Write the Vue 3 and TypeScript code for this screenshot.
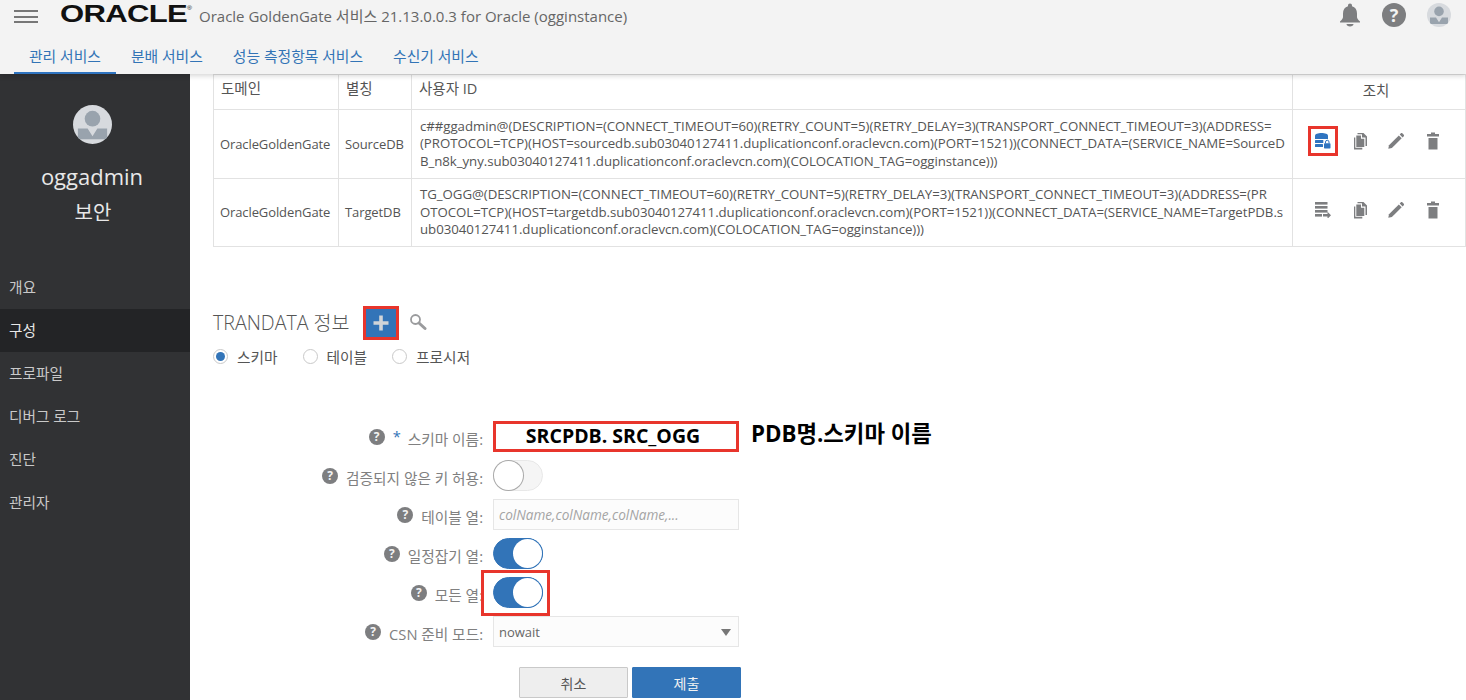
<script setup lang="ts">
const tabs = ['관리 서비스', '분배 서비스', '성능 측정항목 서비스', '수신기 서비스']
const nav = ['개요', '구성', '프로파일', '디버그 로그', '진단', '관리자']
const rows = [
  {
    domain: 'OracleGoldenGate',
    alias: 'SourceDB',
    lines: [
      'c##ggadmin@(DESCRIPTION=(CONNECT_TIMEOUT=60)(RETRY_COUNT=5)(RETRY_DELAY=3)(TRANSPORT_CONNECT_TIMEOUT=3)(ADDRESS=',
      '(PROTOCOL=TCP)(HOST=sourcedb.sub03040127411.duplicationconf.oraclevcn.com)(PORT=1521))(CONNECT_DATA=(SERVICE_NAME=SourceD',
      'B_n8k_yny.sub03040127411.duplicationconf.oraclevcn.com)(COLOCATION_TAG=ogginstance)))',
    ],
    active: true,
  },
  {
    domain: 'OracleGoldenGate',
    alias: 'TargetDB',
    lines: [
      'TG_OGG@(DESCRIPTION=(CONNECT_TIMEOUT=60)(RETRY_COUNT=5)(RETRY_DELAY=3)(TRANSPORT_CONNECT_TIMEOUT=3)(ADDRESS=(PR',
      'OTOCOL=TCP)(HOST=targetdb.sub03040127411.duplicationconf.oraclevcn.com)(PORT=1521))(CONNECT_DATA=(SERVICE_NAME=TargetPDB.s',
      'ub03040127411.duplicationconf.oraclevcn.com)(COLOCATION_TAG=ogginstance)))',
    ],
    active: false,
  },
]
</script>

<template>
  <div class="page">
    <header class="header">
      <div class="top">
        <div class="burger"><i></i><i></i><i></i></div>
        <span class="logo">ORACLE<sup>®</sup></span>
        <span class="title">Oracle GoldenGate 서비스 21.13.0.0.3 for Oracle (ogginstance)</span>
        <div class="top-icons">
          <svg class="bell" viewBox="0 0 22 24" width="22" height="24">
            <path fill="#7d7e80" d="M11 0.5c1.2 0 2 .8 2 2v.7c3.3.9 5 3.600 5 7.300v3.500c0 1.500.9 2.500 3 4.500v1H1v-1c2.100-2 3-3 3-4.500v-3.500c0-3.700 1.700-6.400 5-7.300v-.7c0-1.200.8-2 2-2z"/>
            <path fill="#7d7e80" d="M7.500 21h7c0 1.500-1.500 2.500-3.500 2.500s-3.500-1-3.500-2.500z"/>
          </svg>
          <span class="help big">?</span>
          <svg class="avatar-sm" viewBox="0 0 40 40" width="24" height="24">
            <defs><clipPath id="a1"><circle cx="20" cy="20" r="20"/></clipPath></defs>
            <circle cx="20" cy="20" r="20" fill="#d7dade"/>
            <g clip-path="url(#a1)" fill="#99a3ad">
              <circle cx="20" cy="14" r="8"/>
              <path d="M5 24h10l5 8 5-8h10v11H5z"/>
            </g>
          </svg>
        </div>
      </div>
      <nav class="tabs">
        <a v-for="(t, i) in tabs" :key="t" class="tab" :class="{ on: i === 0 }">{{ t }}</a>
      </nav>
    </header>

    <div class="body">
      <aside class="side">
        <svg class="avatar" viewBox="0 0 40 40" width="39" height="39">
          <defs><clipPath id="a2"><circle cx="20" cy="20" r="20"/></clipPath></defs>
          <circle cx="20" cy="20" r="20" fill="#d7dade"/>
          <g clip-path="url(#a2)" fill="#99a3ad">
            <circle cx="20" cy="14" r="8"/>
            <path d="M5 24h10l5 8 5-8h10v11H5z"/>
          </g>
        </svg>
        <div class="user">oggadmin</div>
        <div class="role">보안</div>
        <ul class="menu">
          <li v-for="(n, i) in nav" :key="n" :class="{ on: i === 1 }">{{ n }}</li>
        </ul>
      </aside>

      <main class="main">
        <table class="grid">
          <colgroup>
            <col class="c1" /><col class="c2" /><col class="c3" /><col class="c4" />
          </colgroup>
          <thead>
            <tr>
              <th>도메인</th><th>별칭</th><th>사용자 ID</th><th class="act-h">조치</th>
            </tr>
          </thead>
          <tbody>
            <tr v-for="r in rows" :key="r.alias">
              <td>{{ r.domain }}</td>
              <td>{{ r.alias }}</td>
              <td class="uid"><div v-for="l in r.lines" :key="l">{{ l }}</div></td>
              <td class="acts">
                <div class="act-row">
                  <span class="ic" :class="{ boxed: r.active }">
                    <svg v-if="r.active" viewBox="0 0 16 16" width="16" height="16">
                      <path fill="#2f74c0" d="M0 2.800C0 1 3 0 6.500 0S13 1 13 2.800V6H0z"/>
                      <rect x="0" y="7" width="13" height="3" rx=".6" fill="#2f74c0"/>
                      <rect x="0" y="11" width="8" height="3" rx=".6" fill="#2f74c0"/>
                      <rect x="8.300" y="6" width="7.700" height="10" fill="#fff"/>
                      <rect x="9" y="10.200" width="6.500" height="5.300" rx=".7" fill="#2f74c0"/>
                      <path d="M10.500 10.400V9a1.750 1.750 0 0 1 3.500 0v1.400" fill="none" stroke="#2f74c0" stroke-width="1"/>
                    </svg>
                    <svg v-else viewBox="0 0 16 16" width="16" height="16">
                      <g fill="#7d7e80">
                        <rect x="0" y="0" width="12.500" height="2.600"/>
                        <rect x="0" y="4" width="12.500" height="2.600"/>
                        <rect x="0" y="8" width="12.500" height="2.600"/>
                        <rect x="0" y="12" width="7" height="2.600"/>
                        <path d="M8 12h4.500V9.800L16 13.300l-3.500 3.500v-2.200H8z"/>
                      </g>
                    </svg>
                  </span>
                  <span class="ic">
                    <svg viewBox="0 0 20 20" width="20" height="20" fill="#7d7e80">
                      <path d="M7.500 2h6l3.500 3.500V15h-1.500V6.500h-3.500V3.300H7.500z"/>
                      <path d="M6.300 4.500h4.700v3.200h3.300V16H6.300z"/>
                      <path d="M4 6.500h1.300v10.300h7V18.500H4z"/>
                    </svg>
                  </span>
                  <span class="ic">
                    <svg viewBox="0 0 20 20" width="20" height="20" fill="#7d7e80">
                      <path d="M3 14.200 12.800 4.400l2.900 2.900-9.800 9.800-3.600.7z"/>
                      <path d="M13.700 3.500l1.200-1.200c.4-.4 1-.4 1.400 0l1.500 1.500c.4.400.4 1 0 1.400l-1.200 1.200z"/>
                    </svg>
                  </span>
                  <span class="ic">
                    <svg viewBox="0 0 20 20" width="20" height="20" fill="#7d7e80">
                      <path d="M8 1.500h4V3h4v2.600H4V3h4z"/>
                      <path d="M5.500 7h9v11.500h-9z"/>
                    </svg>
                  </span>
                </div>
              </td>
            </tr>
          </tbody>
        </table>

        <div class="section">
          <h2>TRANDATA 정보</h2>
          <button class="plus" type="button">
            <svg viewBox="0 0 16 16" width="16" height="16"><path fill="#d0d4d8" d="M6.200 .5h3.600v5.700h5.700v3.600H9.800v5.700H6.200V9.800H.5V6.200h5.700z"/></svg>
          </button>
          <svg class="search" viewBox="0 0 18 18" width="18" height="18">
            <circle cx="6.500" cy="6.500" r="4.500" fill="none" stroke="#9a9b9d" stroke-width="1.800"/>
            <path d="M10 10l6 5.500" stroke="#9a9b9d" stroke-width="3" stroke-linecap="round"/>
          </svg>
        </div>

        <div class="radios">
          <label class="radio"><i class="dot on"></i>스키마</label>
          <label class="radio"><i class="dot"></i>테이블</label>
          <label class="radio"><i class="dot"></i>프로시저</label>
        </div>

        <div class="form">
          <div class="lab"><span class="help">?</span><em>*</em>스키마 이름:</div>
          <div class="ctl annot-row">
            <div class="schema">SRCPDB. SRC_OGG</div>
            <div class="note">PDB명.스키마 이름</div>
          </div>

          <div class="lab"><span class="help">?</span>검증되지 않은 키 허용:</div>
          <div class="ctl"><span class="toggle"><i></i></span></div>

          <div class="lab"><span class="help">?</span>테이블 열:</div>
          <div class="ctl"><div class="field ph">colName,colName,colName,...</div></div>

          <div class="lab"><span class="help">?</span>일정잡기 열:</div>
          <div class="ctl"><span class="toggle on"><i></i></span></div>

          <div class="lab"><span class="help">?</span>모든 열:</div>
          <div class="ctl"><span class="toggle on marked"><i></i></span></div>

          <div class="lab"><span class="help">?</span>CSN 준비 모드:</div>
          <div class="ctl">
            <div class="field sel">nowait<b></b></div>
          </div>
        </div>

        <div class="btns">
          <button class="btn" type="button">취소</button>
          <button class="btn pri" type="button">제출</button>
        </div>
      </main>
    </div>
  </div>
</template>

<style>
html, body { margin: 0; background: #fff; overflow: hidden; }
</style>

<style scoped>
.page {
  width: 1466px;
  height: 700px;
  overflow: hidden;
  display: flex;
  flex-direction: column;
  font-family: "Open Sans", "Noto Sans CJK KR", sans-serif;
  color: #555;
  font-size: 13px;
}
.header {
  height: 74px;
  flex: none;
  background: #f3f3f3;
  box-shadow: 0 2px 5px rgba(0, 0, 0, .16);
  position: relative;
  z-index: 2;
  display: flex;
  flex-direction: column;
}
.top {
  height: 40px;
  padding: 0 14px;
  display: flex;
  align-items: flex-start;
  box-sizing: border-box;
}
.burger {
  width: 24px;
  margin-top: 10px;
  display: flex;
  flex-direction: column;
  gap: 3.500px;
}
.burger i { display: block; height: 2px; background: #777; }
.logo {
  margin-left: 22px;
  margin-top: 0;
  width: 139px;
  font-family: "Liberation Sans", sans-serif;
  font-size: 23px;
  line-height: 28px;
  font-weight: 700;
  color: #111;
  transform: scaleX(1.35);
  transform-origin: left center;
  letter-spacing: -.5px;
  white-space: nowrap;
}
.logo sup { font-size: 5px; font-weight: 400; vertical-align: 12px; line-height: 0; }
.title {
  font-size: 15px;
  line-height: 20px;
  margin-top: 6px;
  color: #666;
  white-space: nowrap;
}
.top-icons {
  margin-left: auto;
  display: flex;
  align-items: center;
  gap: 21px;
  margin-top: 3px;
  margin-right: 1px;
}
.help {
  display: inline-flex;
  width: 16px;
  height: 16px;
  border-radius: 50%;
  background: #7d7e80;
  color: #f3f3f3;
  font-family: "Open Sans", sans-serif;
  font-size: 12px;
  font-weight: 700;
  line-height: 16px;
  align-items: center;
  justify-content: center;
  flex: none;
}
.help.big { width: 24px; height: 24px; font-size: 18px; }
.tabs { display: flex; padding-left: 14px; margin-top: 0; flex: 1; }
.tab {
  padding: 6px 15px 0;
  margin-right: 0;
  font-size: 14.800px;
  line-height: 20px;
  color: #3274b6;
  white-space: nowrap;
  box-sizing: border-box;
  border-bottom: 2px solid transparent;
}
.tab.on { border-bottom-color: #2f74c0; }

.body { flex: 1; display: flex; min-height: 0; }
.side {
  width: 190px;
  flex: none;
  background: #313234;
  display: flex;
  flex-direction: column;
  align-items: center;
  color: #e8e8e8;
  padding-top: 31px;
  box-sizing: border-box;
}
.avatar { display: block; margin-right: 6px; }
.user { font-size: 22px; line-height: 30px; margin-top: 17px; margin-right: 6px; }
.role { font-size: 20px; line-height: 28px; margin-top: 8px; margin-right: 4px; }
.menu { list-style: none; margin: 39px 0 0; padding: 0; width: 100%; }
.menu li {
  height: 43px;
  line-height: 43px;
  padding-left: 9px;
  font-size: 14.700px;
  color: #c9c9c9;
}
.menu li.on { background: #232426; color: #e8e8e8; }

.main {
  flex: 1;
  min-width: 0;
  padding-left: 23px;
  box-sizing: border-box;
}
.grid {
  border-collapse: collapse;
  table-layout: fixed;
  width: 1252px;
  font-size: 13px;
  color: #555;
}
.c1 { width: 125px; }
.c2 { width: 73px; }
.c3 { width: 881px; }
.c4 { width: 173px; }
.grid th, .grid td { border: 1px solid #e2e2e2; box-sizing: border-box; }
.grid thead tr { height: 35px; }
.grid tbody tr { height: 68.500px; }
.grid th {
  font-weight: 400;
  font-size: 14.500px;
  text-align: left;
  padding: 0 7px 10px;
  color: #555;
  white-space: nowrap;
}
.grid th.act-h { text-align: center; padding: 0 6px 6px 0; }
.grid td { padding: 0 6px; white-space: nowrap; overflow: visible; letter-spacing: -.1px; }
.grid td.uid { line-height: 17.500px; padding-left: 8px; font-size: 13.250px; letter-spacing: -.05px; }
.acts { padding: 0 !important; }
.act-row { display: flex; padding-left: 15px; margin-bottom: 5px; gap: 6.500px; align-items: center; }
.ic {
  width: 30px;
  height: 30px;
  display: flex;
  align-items: center;
  justify-content: center;
  box-sizing: border-box;
}
.ic.boxed { outline: 3px solid #e8352c; outline-offset: -3px; background: #fff; }

.section {
  display: flex;
  align-items: center;
  margin-top: 60px;
  height: 32px;
}
.section h2 {
  margin: 0;
  font-weight: 300;
  font-size: 19.600px;
  line-height: 32px;
  color: #555;
  width: 150px;
  white-space: nowrap;
}
.plus {
  width: 36px;
  height: 34px;
  padding: 0;
  background: #3274b8;
  border: 3px solid #e8352c;
  display: flex;
  align-items: center;
  justify-content: center;
  box-sizing: border-box;
  flex: none;
}
.search { margin-left: 10px; margin-top: -2px; }

.radios {
  display: flex;
  align-items: center;
  height: 20px;
  margin-top: 7px;
}
.radio {
  display: flex;
  align-items: center;
  font-size: 14.700px;
  color: #555;
  margin-right: 25px;
}
.dot {
  width: 15px;
  height: 15px;
  border: 1px solid #c9c9c9;
  border-radius: 50%;
  box-sizing: border-box;
  margin-right: 9px;
  background: #fff;
  position: relative;
  display: block;
}
.dot.on::after {
  content: "";
  position: absolute;
  left: 2px;
  top: 2px;
  width: 9px;
  height: 9px;
  border-radius: 50%;
  background: #3274b8;
}

.form {
  display: grid;
  grid-template-columns: 270px 246px;
  column-gap: 10px;
  row-gap: 8px;
  grid-auto-rows: 31px;
  margin-top: 55px;
}
.lab {
  display: flex;
  align-items: center;
  justify-content: flex-end;
  font-size: 14.700px;
  color: #808080;
  white-space: nowrap;
  padding-top: 4px;
}
.lab .help { margin-right: 8px; margin-top: -4px; }
.lab em { color: #3274b8; font-style: normal; margin-right: 7px; margin-top: -6px; }
.ctl { display: flex; align-items: center; position: relative; }
.annot-row { width: 246px; }
.schema {
  width: 246px;
  height: 31px;
  flex: none;
  box-sizing: border-box;
  border: 3px solid #e8352c;
  text-align: center;
  font-size: 19.500px;
  font-weight: 700;
  line-height: 24px;
  color: #000;
  background: #fff;
  padding-right: 6px;
}
.note {
  flex: none;
  margin-left: 12px;
  font-size: 22.300px;
  font-weight: 700;
  color: #000;
  white-space: nowrap;
  margin-top: -8px;
}
.field {
  width: 246px;
  height: 31px;
  box-sizing: border-box;
  border: 1px solid #e6e6e6;
  background: #fcfcfc;
  line-height: 30px;
  padding-left: 5px;
  font-size: 13px;
  color: #666;
  position: relative;
}
.ph { font-style: italic; color: #a4a4a4; font-size: 13.600px; }
.sel b {
  position: absolute;
  right: 7px;
  top: 12px;
  border-left: 5.500px solid transparent;
  border-right: 5.500px solid transparent;
  border-top: 7px solid #777;
}
.toggle {
  width: 50px;
  height: 31px;
  border-radius: 16px;
  background: #f5f5f5;
  border: 1px solid #e8e8e8;
  box-sizing: border-box;
  position: relative;
  display: block;
}
.toggle i {
  position: absolute;
  left: 0;
  top: 0;
  width: 29px;
  height: 29px;
  border-radius: 50%;
  background: #fff;
  box-shadow: 0 0 0 1px #a9a9a9;
}
.toggle.on { background: #3274b8; border-color: #3274b8; }
.toggle.on i { left: auto; right: 0; box-shadow: 0 0 0 1px #3274b8; }
.toggle.marked::after {
  content: "";
  position: absolute;
  left: -13px;
  top: -8px;
  width: 69px;
  height: 46px;
  border: 3px solid #e8352c;
  box-sizing: border-box;
}
.btns {
  display: flex;
  gap: 4px;
  margin-top: 20px;
  padding-left: 306px;
}
.btn {
  width: 109px;
  height: 31px;
  border: 1px solid #c9c9c9;
  background: #eeeeee;
  color: #555;
  font-family: inherit;
  font-size: 14px;
  padding: 0;
  border-radius: 1px;
}
.btn.pri { background: #3274b8; border-color: #3274b8; color: #f2f2f2; }
</style>
